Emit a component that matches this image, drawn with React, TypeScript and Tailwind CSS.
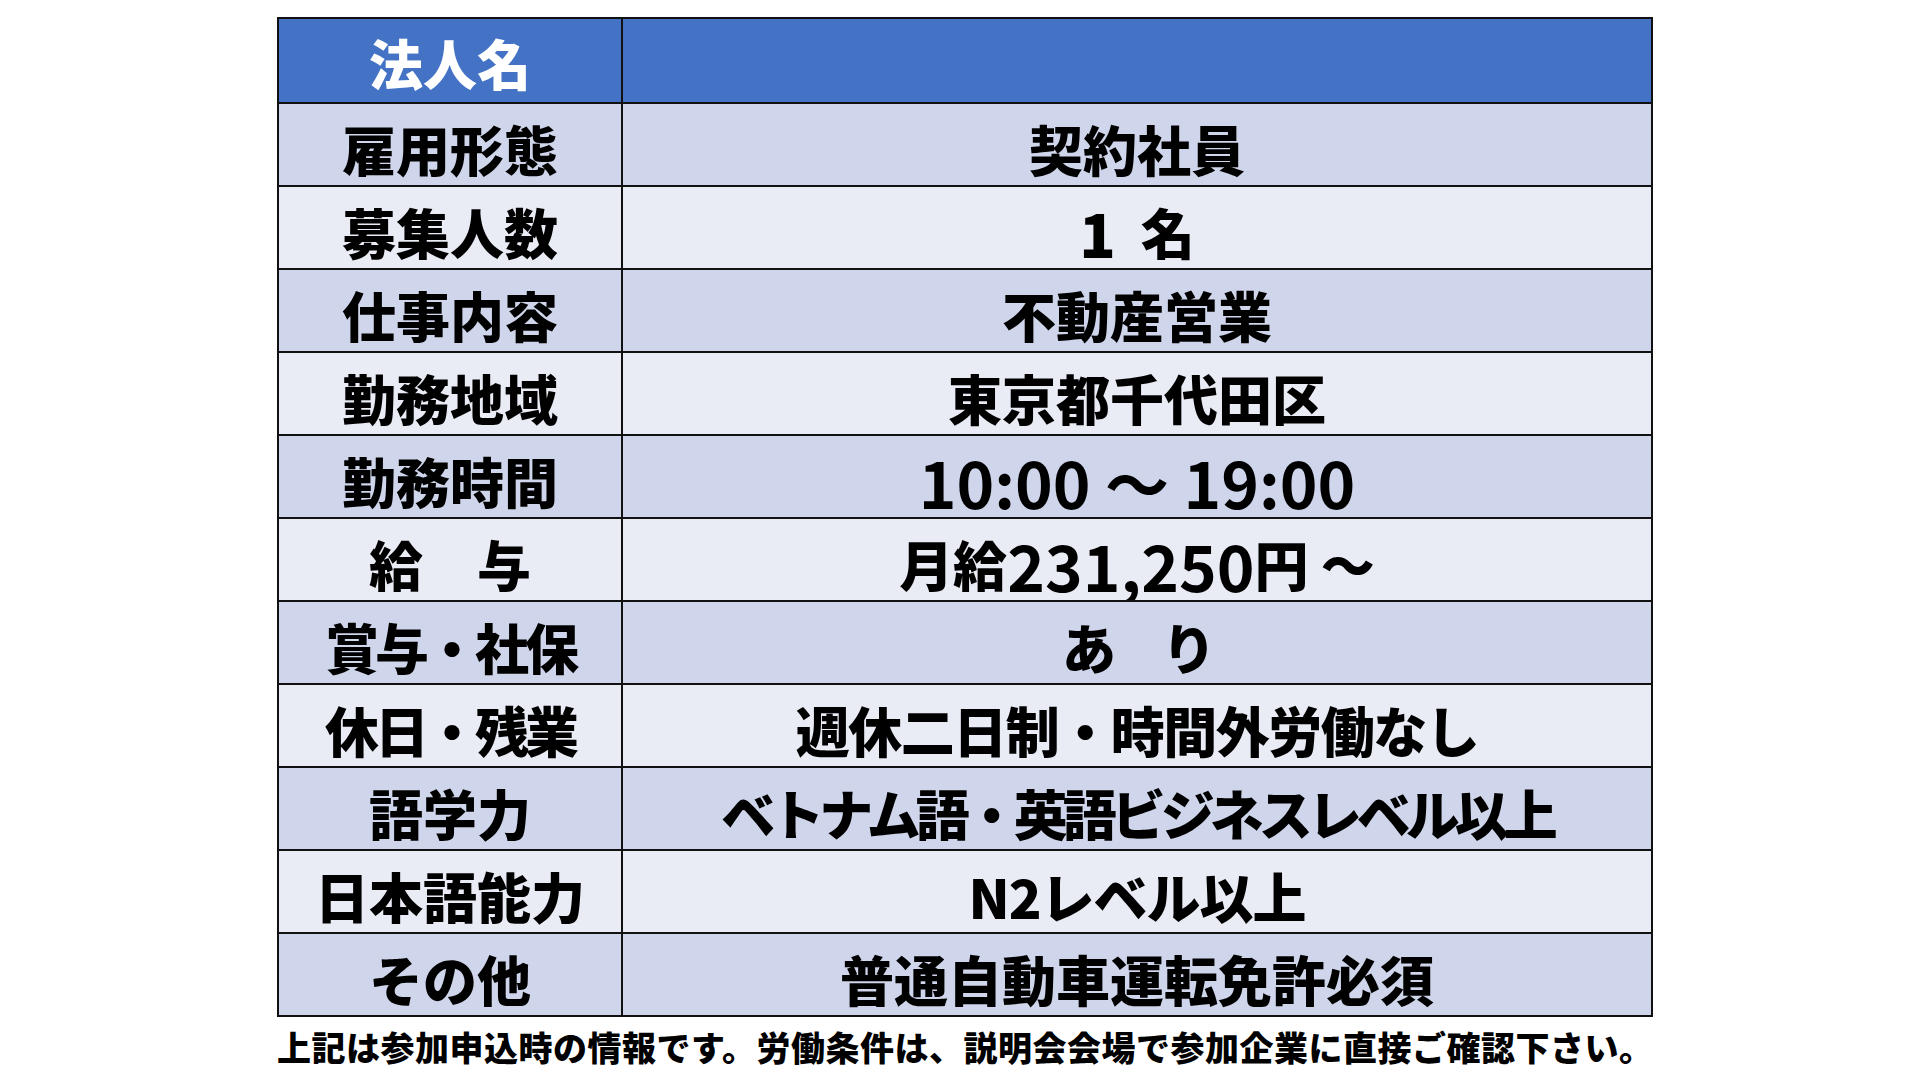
import React from "react";

type Row = {
  label: string;
  value: React.ReactNode;
  labelClass?: string;
  valueClass?: string;
};

const num = "text-[64px] font-semibold tracking-[0px]";

const rows: Row[] = [
  { label: "雇用形態", value: "契約社員" },
  {
    label: "募集人数",
    value: (
      <>
        <span className="text-[60px] font-black">1</span>  名
      </>
    ),
  },
  { label: "仕事内容", value: "不動産営業" },
  { label: "勤務地域", value: "東京都千代田区" },
  {
    label: "勤務時間",
    value: <span className={num}>10:00 ～ 19:00</span>,
  },
  {
    label: "給　与",
    value: (
      <>
        月給<span className={num}>231,250</span>円 ～
      </>
    ),
  },
  { label: "賞与・社保", value: "あ　り", labelClass: "tracking-[-4px]", valueClass: "tracking-[-4px]" },
  {
    label: "休日・残業",
    value: "週休二日制・時間外労働なし",
    labelClass: "tracking-[-4px]",
    valueClass: "tracking-[-1.5px]",
  },
  {
    label: "語学力",
    value: "ベトナム語・英語ビジネスレベル以上",
    valueClass: "tracking-[-5px]",
  },
  { label: "日本語能力", value: "N2レベル以上", valueClass: "tracking-[-1px]" },
  { label: "その他", value: "普通自動車運転免許必須" },
];

export default function App() {
  return (
    <div
      className="w-full h-[1080px] bg-white pt-[17px] pl-[277px]"
      style={{ fontFamily: '"Noto Sans CJK JP", "Noto Sans", sans-serif' }}
    >
      {/* Job info table */}
      <div className="w-[1376px] border-2 border-[#111] grid grid-cols-[344px_1fr]">
        <div className="h-[83px] bg-[#4472C4] border-r-2 border-[#111] flex items-center justify-center pt-1 text-white text-[54px] font-black leading-none">
          法人名
        </div>
        <div className="h-[83px] bg-[#4472C4]" />

        {rows.map((r, i) => {
          const bg = i % 2 === 0 ? "bg-[#CFD5EA]" : "bg-[#E9EBF5]";
          return (
            <React.Fragment key={r.label}>
              <div
                className={`h-[83px] ${bg} border-t-2 border-r-2 border-[#111] flex items-center justify-center pt-2 text-black text-[54px] font-black leading-none whitespace-pre ${r.labelClass ?? ""}`}
              >
                {r.label}
              </div>
              <div
                className={`h-[83px] ${bg} border-t-2 border-[#111] flex items-center justify-center pt-2 text-black text-[54px] font-black leading-none whitespace-pre ${r.valueClass ?? ""}`}
              >
                {r.value}
              </div>
            </React.Fragment>
          );
        })}
      </div>

      <p className="mt-[13px] text-[34px] font-black leading-none text-black tracking-[0.5px]">
        上記は参加申込時の情報です。労働条件は、説明会会場で参加企業に直接ご確認下さい。
      </p>
    </div>
  );
}
